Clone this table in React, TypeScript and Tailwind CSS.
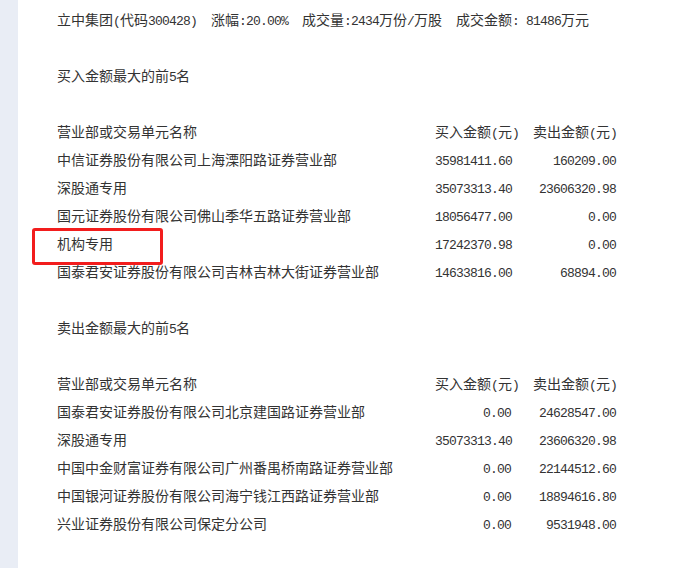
import React from 'react';

// half-width runs (digits, latin, punctuation) get a narrow mono face, CJK stays at 14px
const T: React.FC<{ s: string }> = ({ s }) => {
  const parts = s.split(/([\x00-\x7f]+)/).filter((p) => p.length > 0);
  return (
    <span>
      {parts.map((p, i) =>
        /^[\x00-\x7f]+$/.test(p) ? (
          <span key={i} className="font-['Liberation_Mono',monospace] text-[13px] tracking-[-0.8px] whitespace-pre">
            {p}
          </span>
        ) : (
          <span key={i}>{p}</span>
        )
      )}
    </span>
  );
};

type Row = [string, string, string];

const buyTop: Row[] = [
  ['中信证券股份有限公司上海溧阳路证券营业部', '35981411.60', '160209.00'],
  ['深股通专用', '35073313.40', '23606320.98'],
  ['国元证券股份有限公司佛山季华五路证券营业部', '18056477.00', '0.00'],
  ['机构专用', '17242370.98', '0.00'],
  ['国泰君安证券股份有限公司吉林吉林大街证券营业部', '14633816.00', '68894.00'],
];

const sellTop: Row[] = [
  ['国泰君安证券股份有限公司北京建国路证券营业部', '0.00', '24628547.00'],
  ['深股通专用', '35073313.40', '23606320.98'],
  ['中国中金财富证券有限公司广州番禺桥南路证券营业部', '0.00', '22144512.60'],
  ['中国银河证券股份有限公司海宁钱江西路证券营业部', '0.00', '18894616.80'],
  ['兴业证券股份有限公司保定分公司', '0.00', '9531948.00'],
];

const Line: React.FC<{ children?: React.ReactNode }> = ({ children }) => (
  <div className="h-[28px] leading-[28px] flex items-baseline whitespace-nowrap">{children}</div>
);

const Header = () => (
  <Line>
    <div className="w-[378px]">营业部或交易单元名称</div>
    <div className="w-[98px]"><T s="买入金额(元)" /></div>
    <div className="w-[90px]"><T s="卖出金额(元)" /></div>
  </Line>
);

const DataRow: React.FC<{ r: Row }> = ({ r }) => (
  <Line>
    <div className="w-[378px] overflow-hidden">{r[0]}</div>
    <div className="w-[98px]">
      <div className="w-[76px] text-right"><T s={r[1]} /></div>
    </div>
    <div className="w-[83px] text-right"><T s={r[2]} /></div>
  </Line>
);

export default function App() {
  return (
    <div className="relative flex h-[568px] w-[694px] overflow-hidden bg-white font-['Noto_Sans_CJK_SC',sans-serif] text-[14px] text-[#333333]">
      <div className="w-[18px] shrink-0 bg-[#e9edf5]" />
      <div className="pl-[39px] pt-[5px]">
        <Line>
          <T s="立中集团(代码300428)  涨幅:20.00%  成交量:2434万份/万股  成交金额: 81486万元" />
        </Line>
        <Line />
        <Line><T s="买入金额最大的前5名" /></Line>
        <Line />
        <Header />
        {buyTop.map((r, i) => (
          <DataRow key={i} r={r} />
        ))}
        <Line />
        <Line><T s="卖出金额最大的前5名" /></Line>
        <Line />
        <Header />
        {sellTop.map((r, i) => (
          <DataRow key={i} r={r} />
        ))}
      </div>
      {/* highlight box */}
      <div className="absolute left-[32px] top-[228px] h-[37px] w-[131px] rounded-[3px] border-[3px] border-[#f21d1d]" />
    </div>
  );
}
